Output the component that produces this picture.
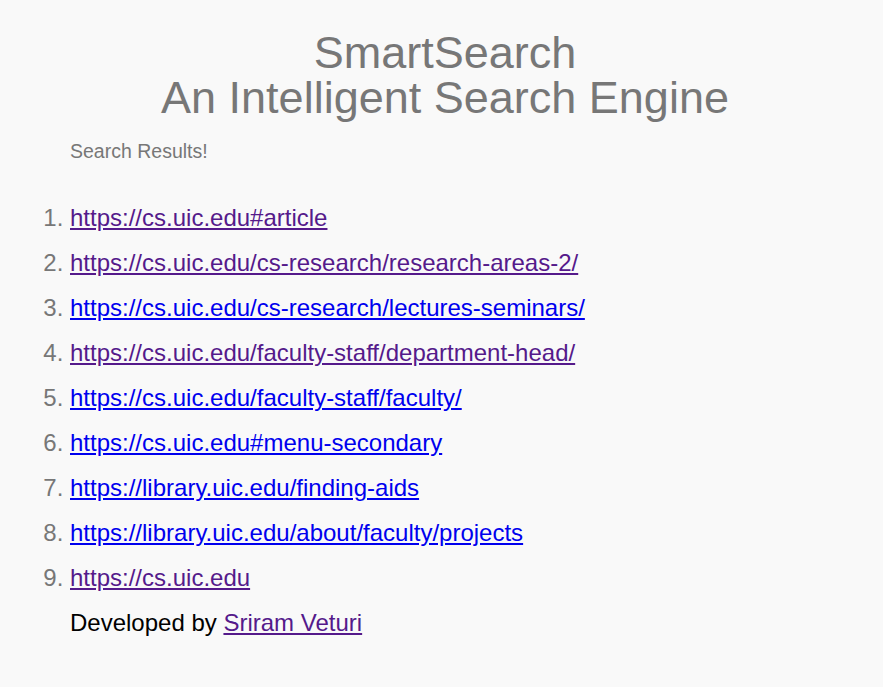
const results = [
  { url: 'https://cs.uic.edu#article', visited: true },
  { url: 'https://cs.uic.edu/cs-research/research-areas-2/', visited: true },
  { url: 'https://cs.uic.edu/cs-research/lectures-seminars/', visited: false },
  { url: 'https://cs.uic.edu/faculty-staff/department-head/', visited: true },
  { url: 'https://cs.uic.edu/faculty-staff/faculty/', visited: false },
  { url: 'https://cs.uic.edu#menu-secondary', visited: false },
  { url: 'https://library.uic.edu/finding-aids', visited: false },
  { url: 'https://library.uic.edu/about/faculty/projects', visited: false },
  { url: 'https://cs.uic.edu', visited: true },
];

const App = () => {
  return (
    <div className="min-h-[687px] bg-[#f9f9f9] font-['Liberation_Sans',Arial,sans-serif]">
      {/* Header */}
      <h1 className="pl-[7px] pt-[30px] text-center text-[45px] leading-[45px] font-normal text-[#777777]">
        SmartSearch
        <br />
        An Intelligent Search Engine
      </h1>

      <p className="mt-[21px] pl-[70px] text-[19.5px] leading-[21px] text-[#777777]">Search Results!</p>

      {/* Results */}
      <ol className="mt-[33px] list-decimal pl-[70px] text-[24px] leading-[45px] text-[#777777]">
        {results.map((r) => (
          <li key={r.url}>
            <a
              href={r.url}
              className={r.visited ? 'text-[#551a8b] underline' : 'text-[#0000ee] underline'}
            >
              {r.url}
            </a>
          </li>
        ))}
      </ol>

      <p className="pl-[70px] text-[24px] leading-[45px] text-black">
        Developed by{' '}
        <a href="#" className="text-[#551a8b] underline">
          Sriram Veturi
        </a>
      </p>
    </div>
  );
};

export default App;
